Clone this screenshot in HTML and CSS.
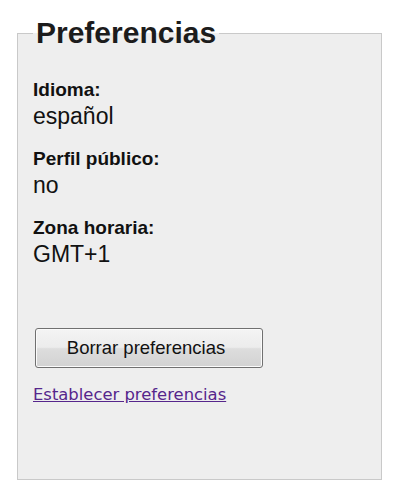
FILE: index.html
```html
<!DOCTYPE html>
<html lang="es">
<head>
<meta charset="utf-8">
<title>Preferencias</title>
<link rel="stylesheet" href="styles.css">
</head>
<body>
<fieldset class="prefs">
  <legend class="prefs-title">Preferencias</legend>
  <div class="pref-list">
    <div class="pref">
      <div class="pref-label">Idioma:</div>
      <div class="pref-value">español</div>
    </div>
    <div class="pref">
      <div class="pref-label">Perfil público:</div>
      <div class="pref-value">no</div>
    </div>
    <div class="pref">
      <div class="pref-label">Zona horaria:</div>
      <div class="pref-value">GMT+1</div>
    </div>
  </div>
  <button class="btn" type="button">Borrar preferencias</button>
  <a class="link" href="#">Establecer preferencias</a>
</fieldset>
</body>
</html>
```
FILE: styles.css
```css
html, body {
  margin: 0;
  padding: 0;
  background: #ffffff;
}

body {
  font-family: "Liberation Sans", Arial, sans-serif;
  color: #111111;
}

.prefs {
  box-sizing: border-box;
  margin: 16px 0 0 17px;
  width: 365px;
  height: 464px;
  padding: 0 15px;
  border: 1px solid #c9c9c9;
  background: #eeeeee;
  display: flex;
  flex-direction: column;
  align-items: flex-start;
}

.prefs-title {
  padding: 0 3px;
  font-size: 30px;
  line-height: 34px;
  font-weight: bold;
  color: #1c1c1c;
}

.pref-list {
  display: flex;
  flex-direction: column;
  gap: 18px;
  margin-top: 29px;
}

.pref-label {
  font-size: 19px;
  line-height: 22px;
  font-weight: bold;
  color: #111111;
}

.pref-value {
  margin-top: 2px;
  font-size: 23px;
  line-height: 27px;
  color: #111111;
}

.btn {
  box-sizing: border-box;
  margin: 60px 0 0 2px;
  width: 228px;
  height: 40px;
  padding: 0 6px 0 0;
  border: 1px solid #707070;
  border-radius: 3px;
  background: linear-gradient(to bottom, #f4f4f4 0%, #ececec 48%, #dddddd 52%, #d2d2d2 100%);
  font-family: "Liberation Sans", Arial, sans-serif;
  font-size: 18.5px;
  color: #111111;
  box-shadow: inset 0 0 0 1px #fbfbfb;
}

.link {
  margin-top: 17px;
  font-family: "DejaVu Sans", Verdana, sans-serif;
  font-size: 16.4px;
  line-height: 19px;
  color: #56268c;
  text-decoration: underline;
}
```
